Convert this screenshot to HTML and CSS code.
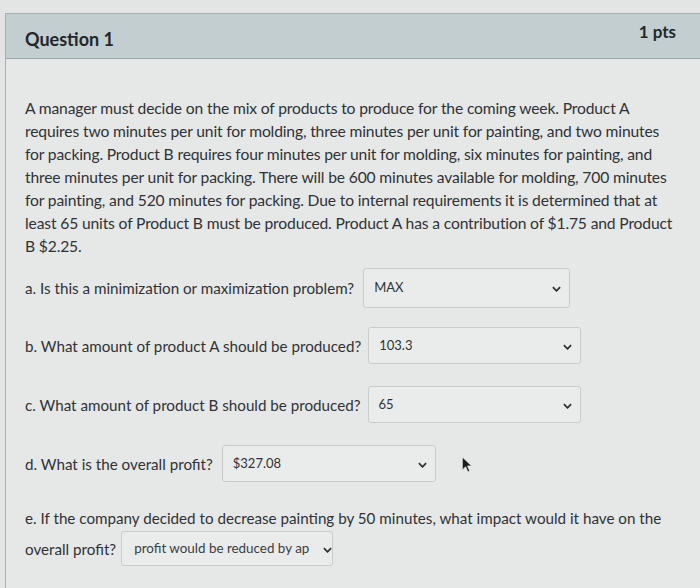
FILE: index.html
```html
<!DOCTYPE html>
<html lang="en">

<head>
    <meta charset="UTF-8">
    <title>Question 1</title>
    <link rel="stylesheet" href="styles.css">
</head>

<body>

    <div class="question">
        <div class="question-header">
            <h2>Question 1</h2>
            <span class="pts">1 pts</span>
        </div>

        <div class="question-body">
            <p class="text">A manager must decide on the mix of products to produce for the coming week. Product A
                requires two minutes per unit for molding, three minutes per unit for painting, and two minutes
                for packing. Product B requires four minutes per unit for molding, six minutes for painting, and
                three minutes per unit for packing. There will be 600 minutes available for molding, 700 minutes
                for painting, and 520 minutes for packing. Due to internal requirements it is determined that at
                least 65 units of Product B must be produced. Product A has a contribution of $1.75 and Product
                B $2.25.</p>

            <div class="row row-a">
                <span>a. Is this a minimization or maximization problem?</span>
                <div class="dropdown">
                    <span>MAX</span>
                    <svg class="chev" viewBox="0 0 10 6"><path d="M1 1 L5 5 L9 1" /></svg>
                </div>
            </div>

            <div class="row row-b">
                <span>b. What amount of product A should be produced?</span>
                <div class="dropdown">
                    <span>103.3</span>
                    <svg class="chev" viewBox="0 0 10 6"><path d="M1 1 L5 5 L9 1" /></svg>
                </div>
            </div>

            <div class="row row-b">
                <span>c. What amount of product B should be produced?</span>
                <div class="dropdown">
                    <span>65</span>
                    <svg class="chev" viewBox="0 0 10 6"><path d="M1 1 L5 5 L9 1" /></svg>
                </div>
            </div>

            <div class="row row-d">
                <span>d. What is the overall profit?</span>
                <div class="dropdown">
                    <span>$327.08</span>
                    <svg class="chev" viewBox="0 0 10 6"><path d="M1 1 L5 5 L9 1" /></svg>
                </div>
                <!-- ponteiro do mouse -->
                <svg class="cursor" viewBox="0 0 12 18">
                    <path d="M1 1 L1 15 L4.5 11.5 L7 17 L9 16 L6.6 10.6 L11 10.6 Z" />
                </svg>
            </div>

            <div class="last">
                <p>e. If the company decided to decrease painting by 50 minutes, what impact would it have on the</p>
                <div class="row row-e">
                    <span>overall profit?</span>
                    <div class="dropdown">
                        <span class="small">profit would be reduced by ap</span>
                        <svg class="chev" viewBox="0 0 10 6"><path d="M1 1 L5 5 L9 1" /></svg>
                    </div>
                </div>
            </div>
        </div>
    </div>

</body>

</html>
```

FILE: styles.css
```css
* {
    margin: 0;
    padding: 0;
    box-sizing: border-box;
}

body {
    font-family: Lato, "Open Sans", sans-serif;
    background-color: #e3e5e4;
    color: #2f3236;
    height: 588px;
    overflow: hidden;
    padding-top: 13px;
}

.question {
    margin-left: 5px;
    margin-right: -4px;
    border-left: 1px solid #a9aeae;
    border-top: 1px solid #a9aeae;
    height: 580px;
    display: flex;
    flex-direction: column;
}

.question-header {
    background-color: #c3ced1;
    height: 45px;
    flex-shrink: 0;
    border-bottom: 1px solid #9ea6a8;
    display: flex;
    justify-content: space-between;
    align-items: center;
    padding: 0 28px 0 19px;
}

.question-header h2 {
    font-size: 18px;
    font-weight: bold;
    color: #23272a;
    padding-top: 6px;
}

.question-header .pts {
    font-size: 17px;
    font-weight: bold;
    color: #23272a;
    margin-top: -10px;
}

.question-body {
    flex: 1;
    background-color: #e6e8e7;
    padding: 38px 18px 0 19px;
    font-size: 15.2px;
}

.text {
    max-width: 653px;
    line-height: 23px;
    font-size: 15.65px;
    letter-spacing: -0.15px;
    margin-bottom: 10px;
}

.row {
    display: flex;
    align-items: center;
    gap: 9px;
    height: 40px;
    margin-bottom: 19px;
    position: relative;
}

.row-a .dropdown {
    width: 207px;
    height: 40px;
}

.row-b {
    gap: 7px;
    height: 37px;
    margin-bottom: 22px;
}

.dropdown {
    display: flex;
    justify-content: space-between;
    align-items: center;
    width: 213px;
    height: 37px;
    border: 1px solid #c9cccb;
    border-radius: 3px;
    background-color: #eaeceb;
    padding: 0 8px 2px 10px;
    font-size: 13px;
    white-space: nowrap;
    overflow: hidden;
}

.row-d {
    height: 37px;
    margin-bottom: 0;
}

.row-d .dropdown {
    width: 214px;
}

.chev {
    flex-shrink: 0;
    width: 9px;
    height: 6px;
    fill: none;
    stroke: #2f3236;
    stroke-width: 2;
    margin-top: 4px;
}

.cursor {
    position: absolute;
    left: 436px;
    top: 11px;
    width: 12px;
    height: 17px;
    fill: #1c1c1c;
    stroke: #eee;
    stroke-width: 0.8;
}

.last p {
    margin-top: 26px;
    line-height: 20px;
}

.row-e {
    gap: 5px;
    margin-top: 3px;
    height: 35px;
}

.row-e .dropdown {
    width: 212px;
    height: 35px;
    padding: 0 8px 2px 12px;
    justify-content: flex-start;
    gap: 14px;
}

.small {
    font-size: 13.4px;
    color: #3a3e42;
}
```
